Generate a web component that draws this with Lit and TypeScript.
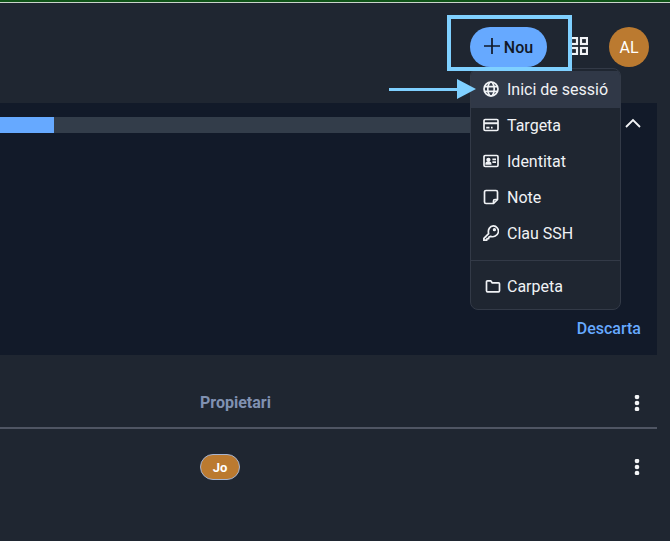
import { html, css, LitElement, svg } from 'lit';
import { customElement } from 'lit/decorators.js';

const menuIcons = {
  globe: svg`<circle cx="8" cy="8" r="7"/><ellipse cx="8" cy="8" rx="3.2" ry="7"/><path d="M1.4 5.6h13.2M1.4 10.4h13.2"/>`,
  card: svg`<rect x="1" y="2.5" width="14" height="11" rx="1.2"/><path d="M1 6.2h14" stroke-width="2"/><path d="M3.2 10.7h3.3M8 10.7h1.6"/>`,
  id: svg`<rect x="1" y="2.5" width="14" height="11" rx="1.2"/><circle cx="5.4" cy="6.8" r="1.3" fill="currentColor"/><path d="M3.2 11c0-2.600 4.400-2.600 4.400 0z" fill="currentColor"/><path d="M9.400 6.400h3.600M9.400 9.200h3.600"/>`,
  note: svg`<path d="M3 1.500h10A1.500 1.500 0 0 1 14.500 3v7.500l-4 4H3A1.500 1.500 0 0 1 1.500 13V3A1.500 1.500 0 0 1 3 1.500z"/><path d="M14.500 10.500h-2.500a1.500 1.500 0 0 0-1.500 1.500v2.500"/>`,
  key: svg`<path d="M5.600 8.600 .9 13.300v1.800h2.800l.4-1.500h1.500l.4-1.500 1.500-.7c3.100 1.100 7-.7 7.800-4C16.100 4.100 13.500.9 10.300.9 7 .9 4.600 4.400 5.600 8.600z"/><circle cx="11.400" cy="4.700" r=".8"/>`,
  folder: svg`<path d="M1.500 3.800V12.800a1 1 0 0 0 1 1h11a1 1 0 0 0 1-1V5.800a1 1 0 0 0-1-1H7.200L5.700 2.800H2.500a1 1 0 0 0-1 1z"/>`,
};

type IconName = keyof typeof menuIcons;

const items: { icon: IconName; label: string; active?: boolean }[] = [
  { icon: 'globe', label: 'Inici de sessió', active: true },
  { icon: 'card', label: 'Targeta' },
  { icon: 'id', label: 'Identitat' },
  { icon: 'note', label: 'Note' },
  { icon: 'key', label: 'Clau SSH' },
];

@customElement('app-root')
export class AppRoot extends LitElement {
  static styles = css`
    :host {
      display: block;
      position: relative;
      width: 670px;
      height: 541px;
      overflow: hidden;
      background: #1f2631;
      font-family: Roboto, 'Liberation Sans', sans-serif;
      color: #f0f2f5;
    }

    .strip {
      height: 2px;
      background: #0f5418;
      border-bottom: 1px solid #c9d3cb;
    }

    .header {
      height: 100px;
      box-sizing: border-box;
      padding: 24px 21px 0 0;
      display: flex;
      justify-content: flex-end;
      align-items: flex-start;
    }

    .new-btn {
      width: 77px;
      height: 40px;
      border-radius: 20px;
      background: #66a9ff;
      color: #111827;
      display: flex;
      align-items: center;
      justify-content: center;
      gap: 4px;
      font-size: 16px;
      font-weight: 500;
    }

    .new-btn svg {
      width: 16px;
      height: 16px;
      margin-top: -2px;
      stroke: #111827;
      stroke-width: 1.7;
      fill: none;
    }

    .apps {
      width: 18px;
      height: 18px;
      margin: 10px 21px 0 23px;
      fill: none;
      stroke: #f0f2f5;
      stroke-width: 2.2;
    }

    .avatar {
      width: 40px;
      height: 40px;
      border-radius: 50%;
      background: #bb7a30;
      color: #fff;
      display: flex;
      align-items: center;
      justify-content: center;
      font-size: 16px;
    }

    .panel {
      height: 252px;
      margin-right: 13px;
      box-sizing: border-box;
      padding-top: 14px;
      background: #121a29;
      display: flex;
      flex-direction: column;
    }

    .progress-row {
      display: flex;
      align-items: center;
      gap: 4px;
    }

    .track {
      width: 620px;
      height: 16px;
      background: #333d4a;
    }

    .fill {
      height: 100%;
      background: #66a9ff;
    }

    .chevron {
      width: 18px;
      height: 16px;
      fill: none;
      stroke: #f3f4f6;
      stroke-width: 1.8;
    }

    .dismiss {
      margin-top: auto;
      padding: 0 16px 17px 0;
      text-align: right;
      color: #66a9ff;
      font-size: 16px;
      font-weight: 500;
      line-height: 18px;
    }

    .row {
      display: flex;
      align-items: center;
      justify-content: space-between;
      margin-right: 13px;
      padding: 0 12px 0 200px;
    }

    .row-head {
      height: 74px;
      box-sizing: border-box;
      padding-top: 23px;
      border-bottom: 2px solid #4f5563;
      color: #8091b1;
      font-size: 16px;
      font-weight: 700;
    }

    .row-body {
      height: 76px;
      box-sizing: border-box;
    }

    .kebab {
      width: 16px;
      height: 16px;
      fill: #f3f4f6;
    }

    .badge {
      width: 40px;
      height: 26px;
      box-sizing: border-box;
      border: 1px solid #a6b4d0;
      border-radius: 13px;
      background: #bb7a30;
      color: #fff;
      display: flex;
      align-items: center;
      justify-content: center;
      font-size: 13px;
      font-weight: 700;
    }

    .menu {
      position: absolute;
      left: 470px;
      top: 68px;
      width: 151px;
      height: 242px;
      box-sizing: border-box;
      padding-top: 2px;
      background: #1f2631;
      border: 1px solid #333a47;
      border-radius: 8px;
      overflow: hidden;
    }

    .item {
      height: 36px;
      display: flex;
      align-items: center;
      gap: 8px;
      padding-left: 12px;
      font-size: 16px;
      font-weight: 400;
    }

    .item.active {
      background: #303847;
      box-shadow: 0 1px 0 #303847;
    }

    .item svg {
      width: 16px;
      height: 16px;
      flex: none;
      fill: none;
      stroke: currentColor;
      stroke-width: 1.7;
    }

    .item.folder svg {
      margin: 0 -2px 0 2px;
    }

    .sep {
      height: 1px;
      margin-top: 9px;
      margin-bottom: 7px;
      background: #333a47;
    }

    .callout {
      position: absolute;
      left: 447px;
      top: 15px;
      width: 125px;
      height: 56px;
      box-sizing: border-box;
      border: 4px solid #7fd0ff;
    }

    .arrow {
      position: absolute;
      left: 389px;
      top: 78px;
      width: 88px;
      height: 22px;
    }
  `;

  protected render() {
    return html`
      <div class="strip"></div>
      <div class="header">
        <div class="new-btn">
          <svg viewBox="0 0 16 16"><path d="M8 0v16M0 8h16" /></svg>
          Nou
        </div>
        <svg class="apps" viewBox="0 0 18 18">
          <rect x="1" y="1" width="6" height="6" />
          <rect x="11" y="1" width="6" height="6" />
          <rect x="1" y="11" width="6" height="6" />
          <rect x="11" y="11" width="6" height="6" />
        </svg>
        <div class="avatar">AL</div>
      </div>

      <div class="panel">
        <div class="progress-row">
          <div class="track"><div class="fill" style="width: 54px"></div></div>
          <svg class="chevron" viewBox="0 0 18 16"><path d="M2 10l7-7 7 7" /></svg>
        </div>
        <div class="dismiss">Descarta</div>
      </div>

      <div class="row row-head">
        <span>Propietari</span>
        ${this.kebab()}
      </div>
      <div class="row row-body">
        <div class="badge">Jo</div>
        ${this.kebab()}
      </div>

      <div class="menu">
        ${items.map(
          (i) => html`
            <div class="item ${i.active ? 'active' : ''}">
              <svg viewBox="0 0 16 16">${menuIcons[i.icon]}</svg>
              ${i.label}
            </div>
          `,
        )}
        <div class="sep"></div>
        <div class="item folder">
          <svg viewBox="0 0 16 16">${menuIcons.folder}</svg>
          Carpeta
        </div>
      </div>

      <div class="callout"></div>
      <svg class="arrow" viewBox="0 0 88 22">
        <path d="M0 11.500h70" stroke="#7fd0ff" stroke-width="3" fill="none" />
        <path d="M68 1l19 10-19 10z" fill="#7fd0ff" />
      </svg>
    `;
  }

  private kebab() {
    return html`
      <svg class="kebab" viewBox="0 0 16 16">
        <circle cx="8" cy="2" r="2.300" />
        <circle cx="8" cy="8" r="2.300" />
        <circle cx="8" cy="14" r="2.300" />
      </svg>
    `;
  }
}
